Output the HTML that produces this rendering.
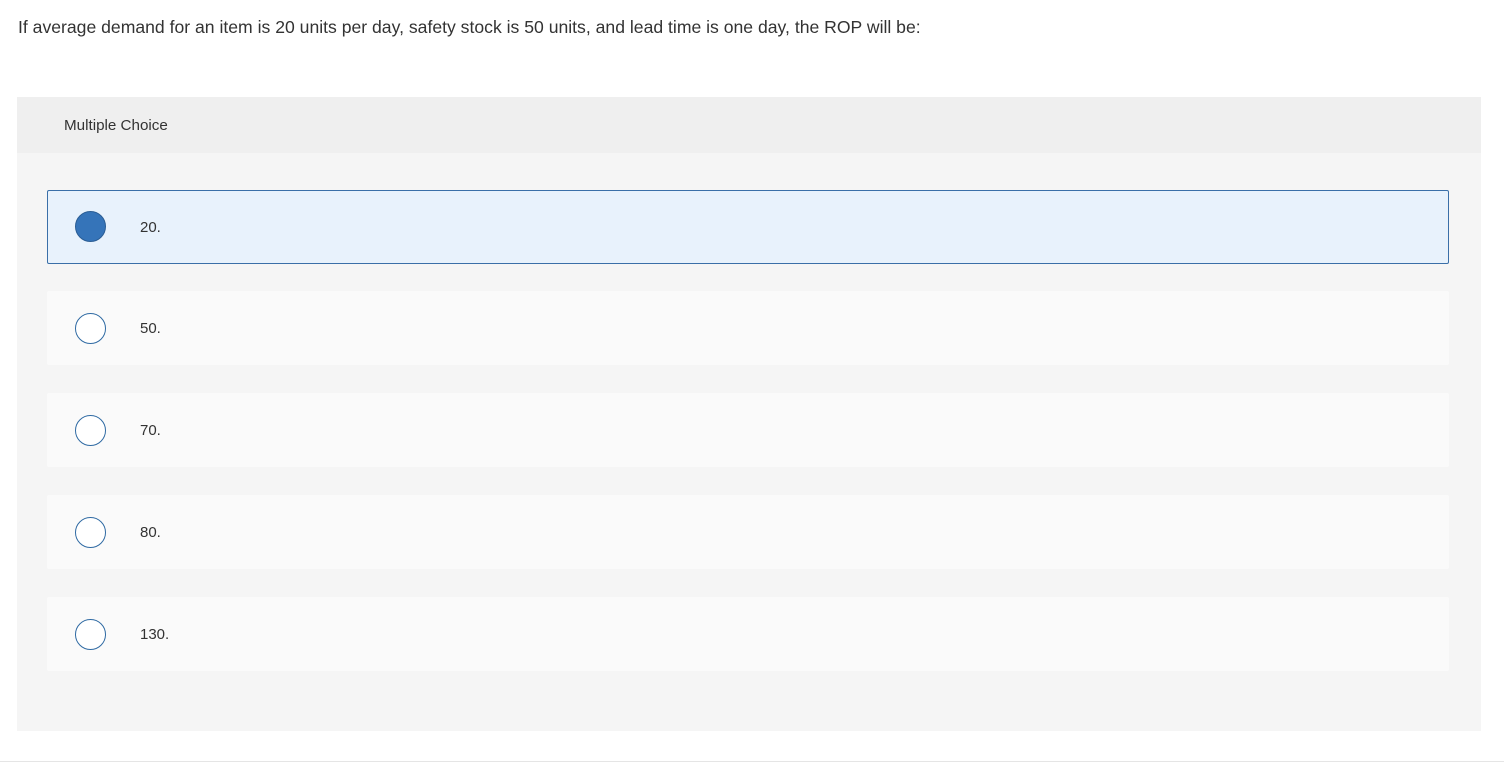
<!DOCTYPE html>
<html><head><style>
body{margin:0;background:#fff;font-family:"Liberation Sans",sans-serif;color:#333;width:1504px;height:763px;position:relative;overflow:hidden}
.q{position:absolute;left:18px;top:17px;font-size:17.6px;color:#333}
.panel{position:absolute;left:17px;top:97px;width:1464px;height:634px;background:#f5f5f5}
.hdr{height:56px;background:#efefef;font-size:15.2px;line-height:58px;padding-left:47px;color:#333}
.opt{position:absolute;left:30px;width:1402px;height:74px;background:#fafafa;border-radius:2px}
.opt.sel{background:#e8f2fc;border:1px solid #3a6fa8;width:1400px;height:72px}
.r{position:absolute;left:28px;top:22px;width:31px;height:31px;border:1.5px solid #2f6aa3;border-radius:50%;background:#fff;box-sizing:border-box}
.sel .r{background:#3574b9;border-color:#2a5d94;left:27px;top:20px;width:31px;height:31px}
.t{position:absolute;left:93px;top:1px;line-height:74px;font-size:15px;color:#333}
.sel .t{line-height:72px;left:92px}
.line{position:absolute;left:0;top:761px;width:1504px;height:1px;background:#e5e5e5}
</style></head><body>
<div class="q">If average demand for an item is 20 units per day, safety stock is 50 units, and lead time is one day, the ROP will be:</div>
<div class="panel">
<div class="hdr">Multiple Choice</div>
<div class="opt sel" style="top:93px"><div class="r"></div><div class="t">20.</div></div>
<div class="opt" style="top:194px"><div class="r"></div><div class="t">50.</div></div>
<div class="opt" style="top:296px"><div class="r"></div><div class="t">70.</div></div>
<div class="opt" style="top:398px"><div class="r"></div><div class="t">80.</div></div>
<div class="opt" style="top:500px"><div class="r"></div><div class="t">130.</div></div>
</div>
<div class="line"></div>
</body></html>
